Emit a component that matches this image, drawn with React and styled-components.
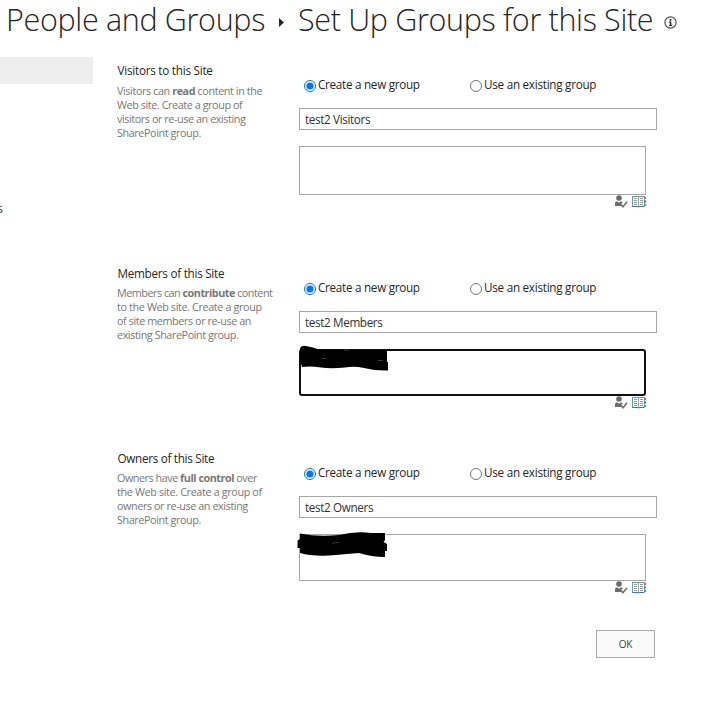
import React from "react";
import styled, { createGlobalStyle } from "styled-components";

const GlobalStyle = createGlobalStyle`
  * { box-sizing: border-box; }
  body {
    margin: 0;
    background: #fff;
    color: #262626;
    font-family: "Open Sans", "Noto Sans", sans-serif;
    font-size: 11.7px;
    overflow: hidden;
  }
`;

const Page = styled.div`
  width: 715px;
  height: 703px;
  overflow: hidden;
`;

const Header = styled.header`
  display: flex;
  height: 57px;
  padding-left: 6px;
  white-space: nowrap;
`;

const Title = styled.h1`
  margin: 0;
  width: ${(p) => p.$width}px;
  font-size: 30.5px;
  font-weight: 300;
  line-height: 38px;
  letter-spacing: ${(p) => p.$spacing}px;
`;

const Arrow = styled.svg`
  width: 5px;
  height: 9px;
  margin: 18px 14px 0 12px;
`;

const InfoIcon = styled.svg`
  width: 13px;
  height: 13px;
  margin: 16px 0 0 9px;
`;

const Body = styled.div`
  display: flex;
  gap: 24px;
`;

const Nav = styled.nav`
  width: 93px;
`;

const NavSelected = styled.div`
  height: 27px;
  background: #eee;
`;

const NavItem = styled.div`
  display: flex;
  justify-content: flex-end;
  width: 3px;
  margin-top: 114px;
  overflow: hidden;
  font-size: 13px;
  line-height: 20px;
  color: #444;
`;

const Form = styled.main`
  width: 540px;
`;

const Section = styled.section`
  display: grid;
  grid-template-columns: 182px 358px;
  height: ${(p) => p.$height}px;
`;

const Intro = styled.div`
  padding-top: 5px;
  white-space: nowrap;
`;

const Heading = styled.h2`
  margin: 0 0 ${(p) => p.$gap}px;
  padding-left: 0.5px;
  font-size: 11.7px;
  font-weight: 400;
  line-height: 16px;
  letter-spacing: ${(p) => p.$spacing}px;
`;

const Line = styled.div`
  font-size: 10.8px;
  line-height: 14px;
  color: #777;
  letter-spacing: ${(p) => p.$spacing}px;
`;

const Fields = styled.div`
  padding-top: 20px;
`;

const Choices = styled.div`
  display: grid;
  grid-template-columns: 166px 1fr;
  height: 31px;
  padding-left: 5px;
`;

const Choice = styled.label`
  display: flex;
  height: 17px;
  line-height: 15px;
  letter-spacing: ${(p) => p.$spacing}px;
  white-space: nowrap;
`;

const Radio = styled.input`
  width: 12px;
  height: 12px;
  margin: 3px 1.5px 0 -0.5px;
`;

const ChoiceText = styled.span`
  margin-left: 1px;
`;

const NameInput = styled.input`
  display: block;
  width: 358px;
  height: 22px;
  padding: 0 5px 1px;
  border: 1px solid #a6a6a6;
  outline: none;
  color: #333;
  font: 11.7px "Open Sans", sans-serif;
  letter-spacing: -0.36px;
`;

const People = styled.div`
  width: 347px;
  height: ${(p) => p.$height}px;
  margin-top: 16px;
  border: ${(p) => (p.$focused ? "2px solid #101010" : "1px solid #a6a6a6")};
  border-radius: ${(p) => (p.$focused ? 3 : 0)}px;
`;

const Scribble = styled.svg`
  display: block;
  width: 94px;
  height: 28px;
  margin: ${(p) => p.$margin};
`;

const Tools = styled.div`
  display: flex;
  justify-content: flex-end;
  gap: 4px;
  width: 347px;
`;

const ToolIcon = styled.svg`
  width: 14px;
  height: 14px;
`;

const Actions = styled.div`
  display: flex;
  justify-content: flex-end;
  padding-right: 2px;
`;

const Button = styled.button`
  width: 59px;
  height: 28px;
  padding: 0 0 1px;
  border: 1px solid #ababab;
  background: #f9f9f9;
  color: #444;
  font: 10px "Open Sans", sans-serif;
  letter-spacing: -0.3px;
`;

const CheckNames = () => (
  <ToolIcon viewBox="0 0 14 14">
    <circle cx="5" cy="3" r="2.8" fill="#6b6b6b" />
    <path d="M1 11V8.2Q1 6.6 3 6.3L5 7.8 7 6.3 9 7.4 7.2 8.7 8.4 11Z" fill="#6b6b6b" />
    <path d="M6.7 9.3 9 11.7 13 6.8" fill="none" stroke="#777" strokeWidth="1.8" />
  </ToolIcon>
);

const Browse = () => (
  <ToolIcon viewBox="0 0 14 14">
    <path d="M.5 1.5H13M.5 1V12" fill="none" stroke="#6a97c0" />
    <path d="M.5 11.5H6L6.5 12.3 7 11.5H12.5" fill="none" stroke="#2878bd" />
    <path d="M6.5 2V12M12.5 2V11" fill="none" stroke="#8fa9c0" />
    <path d="M2 3.5H5M2 5.5H5M2 7.5H5M2 9.5H5M8 3.5H11M8 5.5H11M8 7.5H11M8 9.5H11" stroke="#999" />
    <path d="M12 3H14" stroke="#e85a35" strokeWidth="2" />
    <path d="M12 6.5H14" stroke="#2c80c8" strokeWidth="2" />
    <path d="M12 10H14" stroke="#43a084" strokeWidth="2" />
  </ToolIcon>
);

const MembersMark = () => (
  <Scribble viewBox="0 0 94 28" $margin="-6px 0 0 -4px">
    <path d="M3 3Q5 0 9 1 16 2 22 4.5L46 4.5 47 5H90V17H91V25.5Q80 26 67 23 57 21 48 22.5 34 24 24 22.5 13 21 5 22L3 15Z" />
    <path d="M47 5.2 52 5M25 13.5H29M81 15.5H86" stroke="#777" strokeWidth=".5" />
  </Scribble>
);

const OwnersMark = () => (
  <Scribble viewBox="0 0 94 28" $margin="-4px 0 0 -4px">
    <path d="M4 2.5Q21 6 43 4 60 0 75 2H89V9L87.5 11 91 13V20H89V26Q76 26 63 22 50 23 40 24 18 26 4 22V17H1.5V9.5L4 8Z" />
    <path d="M36 12.5 40 11.5H43" fill="none" stroke="#666" strokeWidth=".5" />
  </Scribble>
);

const sections = [
  {
    name: "visitors",
    heading: "Visitors to this Site",
    headingSpacing: -0.24,
    gap: 6,
    height: 203,
    boxHeight: 49,
    value: "test2 Visitors",
    lines: [
      [<>Visitors can <b>read</b> content in the</>, -0.4],
      ["Web site. Create a group of", -0.42],
      ["visitors or re-use an existing", -0.42],
      ["SharePoint group.", -0.41],
    ],
  },
  {
    name: "members",
    heading: "Members of this Site",
    headingSpacing: -0.26,
    gap: 5,
    height: 185,
    boxHeight: 47,
    focused: true,
    value: "test2 Members",
    lines: [
      [<>Members can <b>contribute</b> content</>, -0.49],
      ["to the Web site. Create a group", -0.37],
      ["of site members or re-use an", -0.41],
      ["existing SharePoint group.", -0.42],
    ],
    mark: <MembersMark />,
  },
  {
    name: "owners",
    heading: "Owners of this Site",
    headingSpacing: -0.29,
    gap: 5,
    height: 185,
    boxHeight: 47,
    value: "test2 Owners",
    lines: [
      [<>Owners have <b>full control</b> over</>, -0.47],
      ["the Web site. Create a group of", -0.36],
      ["owners or re-use an existing", -0.41],
      ["SharePoint group.", -0.41],
    ],
    mark: <OwnersMark />,
  },
];

function GroupSection({ data }) {
  return (
    <Section $height={data.height}>
      <Intro>
        <Heading $spacing={data.headingSpacing} $gap={data.gap}>{data.heading}</Heading>
        {data.lines.map(([text, spacing], i) => (
          <Line key={i} $spacing={spacing}>{text}</Line>
        ))}
      </Intro>
      <Fields>
        <Choices>
          <Choice $spacing={-0.28}>
            <Radio type="radio" name={data.name} defaultChecked />
            <ChoiceText>Create a new group</ChoiceText>
          </Choice>
          <Choice $spacing={-0.26}>
            <Radio type="radio" name={data.name} />
            <ChoiceText>Use an existing group</ChoiceText>
          </Choice>
        </Choices>
        <NameInput defaultValue={data.value} />
        <People $height={data.boxHeight} $focused={data.focused}>{data.mark}</People>
        <Tools>
          <CheckNames />
          <Browse />
        </Tools>
      </Fields>
    </Section>
  );
}

export default function App() {
  return (
    <Page>
      <GlobalStyle />
      <Header>
        <Title $width={261} $spacing={-0.33}>People and Groups</Title>
        <Arrow viewBox="0 0 5 9"><path d="M0 0 5 4.5 0 9Z" fill="#262626" /></Arrow>
        <Title $width={357} $spacing={-0.33}>Set Up Groups for this Site</Title>
        <InfoIcon viewBox="0 0 13 13">
          <circle cx="6.5" cy="6.5" r="5.6" fill="none" stroke="#555" strokeWidth="1.2" />
          <path d="M5.6 3H7.4V4.7H5.6ZM5 5.6H7.4V9H8.2V10H5V9H5.7V6.5H5Z" fill="#333" />
        </InfoIcon>
      </Header>
      <Body>
        <Nav>
          <NavSelected />
          <NavItem>s</NavItem>
        </Nav>
        <Form>
          {sections.map((s) => <GroupSection key={s.name} data={s} />)}
          <Actions><Button>OK</Button></Actions>
        </Form>
      </Body>
    </Page>
  );
}
